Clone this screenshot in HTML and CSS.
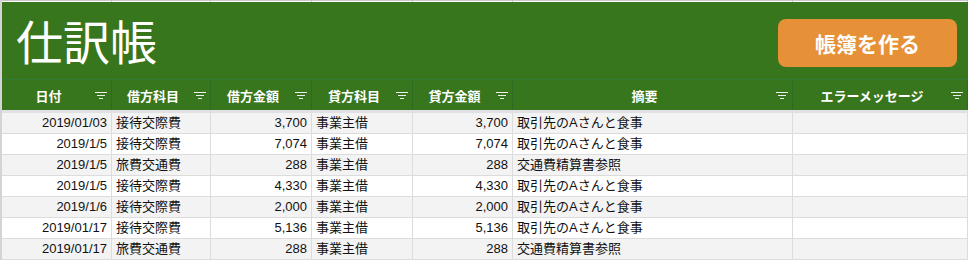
FILE: index.html
```html
<!DOCTYPE html>
<html lang="ja">
<head>
  <meta charset="UTF-8" />
  <meta name="viewport" content="width=device-width, initial-scale=1.0"/>
  <title>仕訳帳</title>
  <link rel="stylesheet" href="styles.css">
</head>
<body>
  <div class="top-strip">
    <span></span><span></span><span></span><span></span><span></span><span></span><span></span>
  </div>

  <header class="banner">
    <div class="title-bar">
      <h1>仕訳帳</h1>
      <button class="make-btn">帳簿を作る</button>
    </div>

    <div class="row head-row">
      <div class="hcell"><span>日付</span><svg class="filter" viewBox="0 0 12 7"><path d="M0 0.5H12M2 3.5H10M4 6.5H8"/></svg></div>
      <div class="hcell"><span>借方科目</span><svg class="filter" viewBox="0 0 12 7"><path d="M0 0.5H12M2 3.5H10M4 6.5H8"/></svg></div>
      <div class="hcell"><span>借方金額</span><svg class="filter" viewBox="0 0 12 7"><path d="M0 0.5H12M2 3.5H10M4 6.5H8"/></svg></div>
      <div class="hcell"><span>貸方科目</span><svg class="filter" viewBox="0 0 12 7"><path d="M0 0.5H12M2 3.5H10M4 6.5H8"/></svg></div>
      <div class="hcell"><span>貸方金額</span><svg class="filter" viewBox="0 0 12 7"><path d="M0 0.5H12M2 3.5H10M4 6.5H8"/></svg></div>
      <div class="hcell"><span>摘要</span><svg class="filter" viewBox="0 0 12 7"><path d="M0 0.5H12M2 3.5H10M4 6.5H8"/></svg></div>
      <div class="hcell"><span>エラーメッセージ</span><svg class="filter" viewBox="0 0 12 7"><path d="M0 0.5H12M2 3.5H10M4 6.5H8"/></svg></div>
    </div>
  </header>

  <div class="freeze-line"></div>

  <main class="sheet">
    <div class="row data-row">
      <div class="cell num">2019/01/03</div><div class="cell">接待交際費</div><div class="cell num">3,700</div>
      <div class="cell">事業主借</div><div class="cell num">3,700</div><div class="cell">取引先のAさんと食事</div><div class="cell"></div>
    </div>
    <div class="row data-row">
      <div class="cell num">2019/1/5</div><div class="cell">接待交際費</div><div class="cell num">7,074</div>
      <div class="cell">事業主借</div><div class="cell num">7,074</div><div class="cell">取引先のAさんと食事</div><div class="cell"></div>
    </div>
    <div class="row data-row">
      <div class="cell num">2019/1/5</div><div class="cell">旅費交通費</div><div class="cell num">288</div>
      <div class="cell">事業主借</div><div class="cell num">288</div><div class="cell">交通費精算書参照</div><div class="cell"></div>
    </div>
    <div class="row data-row">
      <div class="cell num">2019/1/5</div><div class="cell">接待交際費</div><div class="cell num">4,330</div>
      <div class="cell">事業主借</div><div class="cell num">4,330</div><div class="cell">取引先のAさんと食事</div><div class="cell"></div>
    </div>
    <div class="row data-row">
      <div class="cell num">2019/1/6</div><div class="cell">接待交際費</div><div class="cell num">2,000</div>
      <div class="cell">事業主借</div><div class="cell num">2,000</div><div class="cell">取引先のAさんと食事</div><div class="cell"></div>
    </div>
    <div class="row data-row">
      <div class="cell num">2019/01/17</div><div class="cell">接待交際費</div><div class="cell num">5,136</div>
      <div class="cell">事業主借</div><div class="cell num">5,136</div><div class="cell">取引先のAさんと食事</div><div class="cell"></div>
    </div>
    <div class="row data-row">
      <div class="cell num">2019/01/17</div><div class="cell">旅費交通費</div><div class="cell num">288</div>
      <div class="cell">事業主借</div><div class="cell num">288</div><div class="cell">交通費精算書参照</div><div class="cell"></div>
    </div>
  </main>
</body>
</html>
```

FILE: styles.css
```css
:root {
  --green: #38761d;
  --green-line: #2b6b22;
  --orange: #e69138;
  --grid: #dcdcdc;
  --stripe: #f3f3f3;
  --cols: 110px 99px 101px 101px 100px 280px 175px;
}

* {
  margin: 0;
  padding: 0;
  box-sizing: border-box;
}

body {
  font-family: "Liberation Sans", Arial, "Noto Sans CJK JP", sans-serif;
  background: #fff;
  color: #111;
  width: 968px;
  overflow: hidden;
  border-left: 2px solid #d4d4d4;
}

/* 上端のグリッド線 */
.top-strip {
  display: grid;
  grid-template-columns: var(--cols);
  height: 2px;
  background: #fff;
  border-top: 1px solid #c8c8c8;
}

.top-strip span {
  border-right: 1px solid #c8c8c8;
}

.banner {
  background: var(--green);
  color: #fff;
}

.title-bar {
  display: flex;
  align-items: center;
  justify-content: space-between;
  height: 78px;
  padding: 0 11px 0 14px;
  border-bottom: 1px solid #2f7a35;
}

.title-bar h1 {
  font-family: "Noto Sans CJK JP", sans-serif;
  font-weight: 400;
  font-size: 47px;
  line-height: 1;
  margin-top: -2px;
}

.make-btn {
  width: 179px;
  height: 48px;
  margin-top: 5px;
  border: none;
  border-radius: 8px;
  background: var(--orange);
  color: #fff;
  font-family: "Noto Sans CJK JP", sans-serif;
  font-weight: 700;
  font-size: 21px;
}

.row {
  display: grid;
  grid-template-columns: var(--cols);
}

.head-row {
  height: 30px;
}

.hcell {
  display: flex;
  align-items: center;
  border-right: 1px solid var(--green-line);
  padding-right: 4px;
  font-weight: 700;
  font-size: 13px;
}

.hcell span {
  flex: 1;
  text-align: center;
}

.filter {
  width: 12px;
  height: 7px;
  margin-top: 1px;
  stroke: #eef3ea;
  stroke-width: 1;
  fill: none;
}

.freeze-line {
  height: 3px;
  background: #dfe1e5;
}

.data-row {
  height: 21px;
  font-size: 13px;
}

.data-row:nth-child(odd) {
  background: var(--stripe);
}

.cell {
  border-right: 1px solid var(--grid);
  border-bottom: 1px solid var(--grid);
  padding: 0 4px;
  line-height: 20px;
  white-space: nowrap;
  overflow: hidden;
}

.cell.num {
  text-align: right;
}
```
